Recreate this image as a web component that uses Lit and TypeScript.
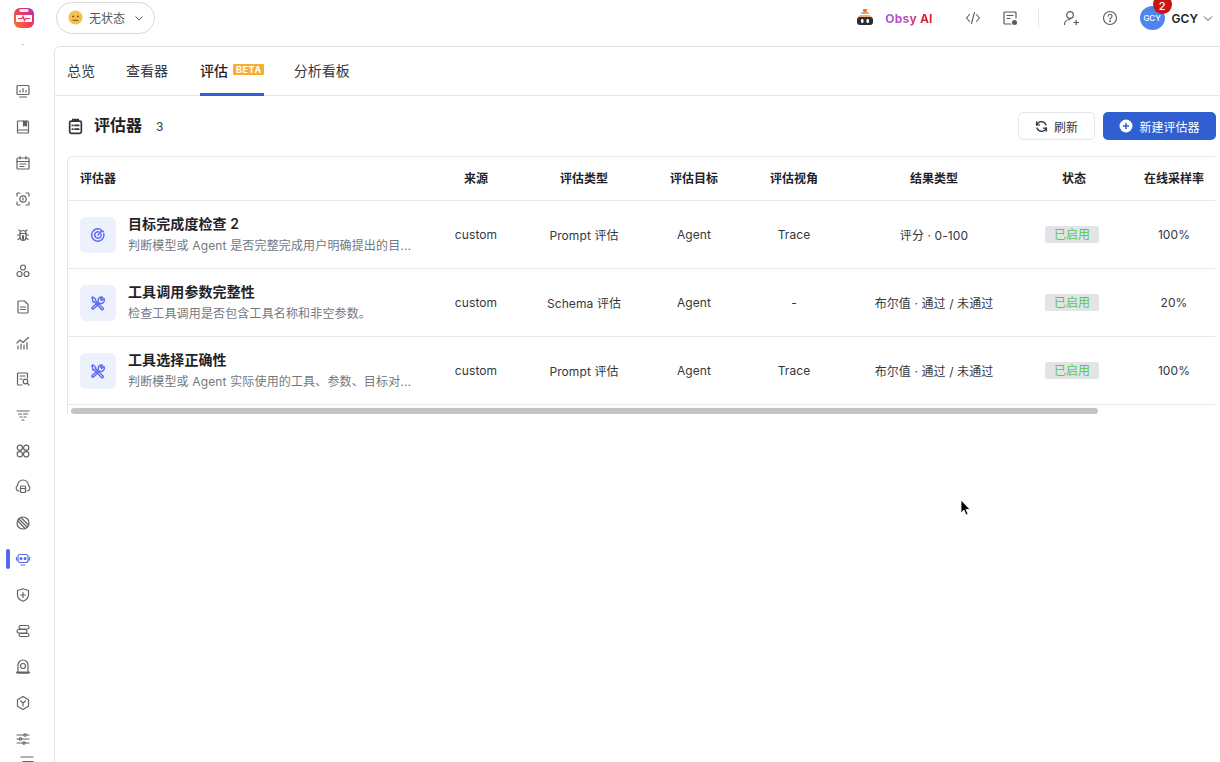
import { LitElement, html, css, svg } from "lit";
import { customElement } from "lit/decorators.js";

const ic = (body: unknown, cls = "") => html`<svg class=${cls} width="16" height="16" viewBox="0 0 16 16" fill="none" stroke="currentColor" stroke-width="1.200" stroke-linecap="round" stroke-linejoin="round">${body}</svg>`;

const sideIcons = [
  svg`<rect x="2" y="2.500" width="12" height="9" rx="1"/><path d="M5 9V7.500M8 9V5.500M11 9V7.500M4.500 14h7"/>`,
  svg`<rect x="2.500" y="2" width="11" height="12" rx="1"/><path d="M2.500 11h11"/><path d="M8.500 2v5l1.500-1 1.500 1V2" fill="currentColor"/>`,
  svg`<rect x="2" y="3" width="12" height="11" rx="1"/><path d="M2 6.500h12M5 1.500V4M11 1.500V4M5 9h6M5 11.500h4"/>`,
  svg`<path d="M2 5V3a1 1 0 0 1 1-1h2M11 2h2a1 1 0 0 1 1 1v2M14 11v2a1 1 0 0 1-1 1h-2M5 14H3a1 1 0 0 1-1-1v-2"/><circle cx="8" cy="8" r="3.200"/><path d="M8 7v2"/>`,
  svg`<path d="M5 6.500a3 3 0 0 1 6 0v4a3 3 0 0 1-6 0z"/><path d="M5.500 4.500 4 3M10.500 4.500 12 3M5 8H2.500M11 8h2.500M5 11l-2 1.500M11 11l2 1.500M5 6.500h6"/><path d="M8 9v3" stroke-width="2"/>`,
  svg`<circle cx="8" cy="4.500" r="2.500"/><circle cx="4.500" cy="11" r="2.500"/><circle cx="11.500" cy="11" r="2.500"/>`,
  svg`<path d="M3 3a1 1 0 0 1 1-1h5.500L13 5.500V13a1 1 0 0 1-1 1H4a1 1 0 0 1-1-1z"/><path d="M5.500 8h5M5.500 10.500h5"/>`,
  svg`<path d="M2 8l3-3 3 2.500L13.500 2.500M3 14v-3M6 14V9M9 14v-4M12 14V7.500"/>`,
  svg`<path d="M12.500 7V3a1 1 0 0 0-1-1h-8a1 1 0 0 0-1 1v10a1 1 0 0 0 1 1h3.500M5 5h5M5 8h2"/><circle cx="10.500" cy="10.500" r="2.300"/><path d="m12.200 12.200 1.800 1.800"/>`,
  svg`<path d="M2 4h12M3.500 7h3M8.500 7h4M5 10h2M9 10h2M7 13h2"/>`,
  svg`<circle cx="4.800" cy="4.800" r="2.600"/><circle cx="11.200" cy="4.800" r="2.600"/><rect x="2.200" y="8.600" width="5.200" height="5.200" rx="2.200"/><rect x="8.600" y="8.600" width="5.200" height="5.200" rx="2.200"/>`,
  svg`<path d="M4 12a3 3 0 0 1-1.500-5.500 5.500 5.500 0 0 1 11 0A3 3 0 0 1 12 12"/><rect x="5.500" y="7" width="5" height="6.500" rx="1"/><path d="M5.500 9.500h5"/>`,
  svg`<circle cx="8" cy="8" r="6"/><path d="M4 4l8 8M6 2.500l7 7M3 6l6.500 7"/>`,
  svg``,
  svg`<path d="M8 1.800 13.500 3.500V8c0 3-2.300 5-5.500 6.200C4.800 13 2.500 11 2.500 8V3.500z"/><path d="M8 5.500v5M5.500 8h5"/>`,
  svg`<rect x="4" y="2.500" width="10" height="3.500" rx="1.700"/><rect x="2" y="6.500" width="10" height="3.500" rx="1.700"/><rect x="4" y="10.500" width="10" height="3" rx="1.500"/>`,
  svg`<path d="M3 14V6a5 5 0 0 1 10 0v8z"/><circle cx="8" cy="7" r="2.500"/><path d="M2 13.500h12" stroke-width="2"/>`,
  svg`<path d="M8 1.500 13.500 4.700v6.600L8 14.500l-5.500-3.200V4.700z"/><path d="M5.500 6 8 8l2.500-2M8 8v3"/>`,
  svg`<path d="M2 4h12M2 8h12M2 12h12"/><circle cx="10" cy="4" r="1.200" fill="#fff"/><circle cx="5.500" cy="8" r="1.200" fill="#fff"/><circle cx="9" cy="12" r="1.200" fill="#fff"/>`,
];

const robot = svg`<rect x="3" y="3.500" width="10" height="8" rx="2"/><path d="M1.500 6.500v2.500M14.500 6.500v2.500M6 14h4"/><circle cx="6" cy="7.500" r=".9" fill="currentColor"/><circle cx="10" cy="7.500" r=".9" fill="currentColor"/>`;

const target = html`<svg width="16" height="16" viewBox="0 0 16 16" fill="none" stroke="#5b6cf0" stroke-width="1.500" stroke-linecap="round"><path d="M13.800 6.500A6.200 6.200 0 1 1 9.500 2"/><path d="M11 7.200A3.200 3.200 0 1 1 8.800 5"/><path d="M8 8l4-4M11 2.500v2h2.500"/></svg>`;
const tools = html`<svg width="16" height="16" viewBox="0 0 16 16" fill="none" stroke="#5b6cf0" stroke-width="1.400" stroke-linecap="round" stroke-linejoin="round"><path d="M2 2.500 3 2l2.500 2v1.500L13 13a1 1 0 0 1-1.500 1.500L4.500 7H3z" /><path d="M13.800 3.500 11.800 5.500 10.500 4.200l2-2A3.200 3.200 0 0 0 8.500 6.500L2.200 12.500a1 1 0 0 0 1.300 1.500L9.500 8a3.200 3.200 0 0 0 4.300-4.500z"/></svg>`;

const rows = [
  { icon: target, name: "目标完成度检查 2", desc: "判断模型或 Agent 是否完整完成用户明确提出的目...", kind: "Prompt 评估", view: "Trace", result: "评分 · 0-100", rate: "100%" },
  { icon: tools, name: "工具调用参数完整性", desc: "检查工具调用是否包含工具名称和非空参数。", kind: "Schema 评估", view: "-", result: "布尔值 · 通过 / 未通过", rate: "20%" },
  { icon: tools, name: "工具选择正确性", desc: "判断模型或 Agent 实际使用的工具、参数、目标对...", kind: "Prompt 评估", view: "Trace", result: "布尔值 · 通过 / 未通过", rate: "100%" },
];

@customElement("app-root")
export class AppRoot extends LitElement {
  static styles = css`
    :host { display: block; height: 762px; width: 1220px; overflow: hidden; background: #fff; color: #1f2329;
      font-family: Inter, "Noto Sans CJK SC", sans-serif; font-size: 12px; }
    * { box-sizing: border-box; }
    .top { height: 46px; display: flex; align-items: center; padding: 0 7px 11px 14px; }
    .logo { width: 20px; height: 20px; flex: none; }
    .status { margin: 0 0 0 22px; width: 99px; height: 32px; border: 1px solid #d9d9d9; border-radius: 16px; display: flex; align-items: center; padding-left: 11px; gap: 6px; color: #53585f; }
    .face { width: 15px; height: 15px; flex: none; }
    .chev { margin-left: 3px; }
    .spacer { flex: 1; }
    .right { display: flex; align-items: center; color: #555b63; margin-top: 1px; }
    .right svg { flex: none; }
    .gap21 { margin-left: 21px; }
    .gap23 { margin-left: 23px; }
    .obsy { font-weight: 700; font-size: 12px; letter-spacing: .2px; margin: 0 32px 0 10px;
      background: linear-gradient(90deg, #a050e0, #c04ab0 45%, #e02030 80%); -webkit-background-clip: text; background-clip: text; color: transparent; }
    .sep { width: 1px; height: 18px; background: #e5e6e8; margin: 0 24px 0 20px; }
    .avatar { position: relative; width: 25px; height: 24px; border-radius: 50%; background: #4f86ee; color: #fff; font-size: 8px; font-weight: 500; display: flex; align-items: center; justify-content: center; margin-left: 22px; flex: none; }
    .badge { position: absolute; left: 13px; top: -11px; width: 19px; height: 19px; border-radius: 50%; background: #c81414; color: #fff; font-size: 11px; padding-top: 5px; line-height: 13px; text-align: center; font-weight: 500; }
    .uname { color: #1f2329; font-weight: 600; font-size: 12px; margin: 0 5px 0 7px; }
    .body { display: flex; height: 716px; }
    .side { width: 54px; flex: none; height: 718px; overflow: hidden; position: relative; margin-top: -2px; color: #5f6368; }
    .cut { height: 4px; overflow: hidden; display: flex; justify-content: center; position: relative; }
    .cut svg { margin-top: -12px; margin-right: 8px; }
    .list { display: flex; flex-direction: column; gap: 20px; padding-top: 35px; align-items: flex-start; padding-left: 15px; }
    .item { height: 16px; display: block; position: relative; }
    .item svg { display: block; overflow: visible; }
    .on { color: #5468ee; }
    .bar { position: absolute; left: -9px; top: -2px; width: 4px; height: 20px; border-radius: 2px; background: #5468ee; }
    .coll { margin-top: -12px; }
    .main { flex: 1; min-width: 0; border: 1px solid #e1e3e6; border-right: 0; border-bottom: 0; border-radius: 6px 0 0 0; padding-right: 5px; }
    .tabs { height: 49px; margin-right: -5px; border-bottom: 1px solid #e4e6ea; display: flex; padding-left: 12px; gap: 31px; font-size: 14px; color: #33383f; }
    .tab { height: 49px; padding-bottom: 4px; display: flex; align-items: center; gap: 5px; position: relative; }
    .tab.act { font-weight: 500; color: #1f2329; margin: 0 -1px 0 1px; }
    .tab.act::after { content: ""; position: absolute; left: 0; right: 0; bottom: 0; height: 3px; background: #2f5fd0; }
    .beta { background: #f7ae2e; color: #fff; font-size: 9px; font-weight: 700; letter-spacing: .6px; height: 11px; line-height: 11px; padding: 0 2px 0 3px; border-radius: 1px; }
    .head { display: flex; align-items: center; height: 28px; margin: 16px -1px 16px 12px; }
    .head .t { font-size: 16px; font-weight: 600; margin-left: 10px; line-height: 26px; padding-bottom: 2px; }
    .head .n { font-size: 12px; margin-left: 14px; color: #33383f; }
    .btn { height: 28px; border-radius: 5px; display: flex; align-items: center; font-size: 12px; }
    .refresh { width: 77px; border: 1px solid #e4e6ea; gap: 6px; justify-content: center; color: #33383f; margin-right: 8px; }
    .new { width: 113px; background: #2f5fd0; color: #fff; gap: 6px; justify-content: center; }
    .table { margin-left: 12px; border: 1px solid #e6e7ea; border-right: 0; border-bottom: 0; border-radius: 6px 0 0 0; overflow: hidden; }
    .r { display: grid; grid-template-columns: 356px 104px 112px 108px 92px 188px 92px 108px; border-bottom: 1px solid #e6e7ea; align-items: center; text-align: center; color: #33383f; }
    .r.h { height: 44px; padding-bottom: 2px; font-weight: 600; color: #1f2329; font-size: 12px; }
    .r.d { height: 68px; font-size: 12px; letter-spacing: .1px; }
    .first { text-align: left; padding-left: 12px; display: flex; gap: 12px; align-items: center; }
    .ibox { width: 36px; height: 36px; border-radius: 6px; background: #edf0fd; display: flex; align-items: center; justify-content: center; flex: none; }
    .name { font-size: 14px; font-weight: 600; line-height: 20px; color: #1f2329; letter-spacing: .1px; }
    .desc { font-size: 12px; line-height: 18px; color: #73787f; margin-top: 3px; white-space: nowrap; letter-spacing: .15px; }
    .tag { display: inline-block; width: 54px; height: 17px; line-height: 17px; border-radius: 2px; background: #e3e4e7; color: #5bc83c; font-size: 12px; letter-spacing: 0; margin-right: 4px; }
    .scroll { height: 6px; margin: 3px 0 0 3px; width: 1027px; background: #c4c4c4; border-radius: 3px; }
    .cursor { position: absolute; left: 960px; top: 499px; }
  `;

  render() {
    return html`
      <div class="top">
        <svg class="logo" viewBox="0 0 20 20">
          <defs><linearGradient id="lg" x1="0" y1="1" x2="1" y2="0"><stop offset="0" stop-color="#fa7a1e"/><stop offset=".5" stop-color="#ef3d5a"/><stop offset="1" stop-color="#a82fb0"/></linearGradient></defs>
          <rect width="20" height="20" rx="6" fill="url(#lg)"/>
          <path d="M6 1a2.200 2.200 0 0 0 0 3h8a2.200 2.200 0 0 0 0-3" fill="#fff" opacity=".85"/>
          <rect x="2" y="7" width="16" height="7" fill="#fff" opacity=".95"/>
          <path d="M4 10.500h4l1-2 1.500 4 1-2h4.500" stroke="#e8344e" stroke-width="1.200" fill="none"/>
        </svg>
        <div class="status">
          <svg class="face" viewBox="0 0 16 16"><circle cx="8" cy="8" r="7.500" fill="#f6c04f"/><circle cx="5.500" cy="6.800" r="1" fill="#6d4a1c"/><circle cx="10.500" cy="6.800" r="1" fill="#6d4a1c"/><path d="M5 11h6" stroke="#6d4a1c" stroke-width="1"/></svg>
          <span>无状态</span>
          <svg class="chev" width="10" height="10" viewBox="0 0 10 10" fill="none" stroke="#555" stroke-width="1"><path d="M1.500 3.500 5 7l3.500-3.500"/></svg>
        </div>
        <div class="spacer"></div>
        <div class="right">
          <svg width="20" height="18" viewBox="0 0 20 18"><path d="M8 0h4v1.500a2 2 0 0 1-4 0z" fill="#f0752a"/><rect x="6" y="3" width="8" height="2" rx="1" fill="#f0a060"/><path d="M2 11a5 5 0 0 1 5-5h6a5 5 0 0 1 5 5v3H2z" fill="#f3b27a"/><rect x="2" y="8" width="16" height="8" rx="3" fill="#2b2e36"/><rect x="6" y="10" width="2.500" height="4" rx="1.200" fill="#fff"/><rect x="11.500" y="10" width="2.500" height="4" rx="1.200" fill="#fff"/></svg>
          <span class="obsy">Obsy AI</span>
          <svg width="16" height="16" viewBox="0 0 16 16" fill="none" stroke="currentColor" stroke-width="1.100" stroke-linecap="round" stroke-linejoin="round"><path d="M4.500 4.500 1.500 8l3 3.500M11.500 4.500l3 3.500-3 3.500M9.500 2.500l-3 11"/></svg>
          <svg class="gap21" width="16" height="16" viewBox="0 0 16 16" fill="none" stroke="currentColor" stroke-width="1.200" stroke-linecap="round"><path d="M14 8V3a1 1 0 0 0-1-1H3a1 1 0 0 0-1 1v10a1 1 0 0 0 1 1h6M5 5.500h6M5 8.500h3"/><circle cx="12.500" cy="12.500" r="2.500" fill="currentColor" stroke="none"/></svg>
          <div class="sep"></div>
          <svg width="16" height="16" viewBox="0 0 16 16" fill="none" stroke="currentColor" stroke-width="1.200" stroke-linecap="round"><circle cx="7" cy="5" r="3.300"/><path d="M1.500 14.500c0-3 2.300-5 5.500-5M11 12.500h4.500M13.200 10.300v4.400"/></svg>
          <svg class="gap23" width="16" height="16" viewBox="0 0 16 16" fill="none" stroke="currentColor" stroke-width="1.100" stroke-linecap="round"><circle cx="8" cy="8" r="6.500"/><path d="M6.200 6.200a1.900 1.900 0 1 1 2.700 1.700c-.6.300-.9.700-.9 1.400"/><circle cx="8" cy="11.300" r=".4" fill="currentColor"/></svg>
          <div class="avatar">GCY<span class="badge">2</span></div>
          <span class="uname">GCY</span>
          <svg width="10" height="10" viewBox="0 0 10 10" fill="none" stroke="#555" stroke-width="1"><path d="M1 3.500 5 7.500l4-4"/></svg>
        </div>
      </div>
      <div class="body">
        <div class="side">
          <div class="cut">${ic(svg`<path d="M2 9l6 3 6-3"/>`)}</div>
          <div class="list">
            ${sideIcons.map((b, i) => i === 13
              ? html`<div class="item on"><span class="bar"></span>${ic(robot)}</div>`
              : html`<div class="item">${ic(b)}</div>`)}
            <div class="item coll">${ic(svg`<path d="M6 2h12M8 6.500h10"/>`)}</div>
          </div>
        </div>
        <div class="main">
          <div class="tabs">
            <div class="tab">总览</div>
            <div class="tab">查看器</div>
            <div class="tab act">评估<span class="beta">BETA</span></div>
            <div class="tab">分析看板</div>
          </div>
          <div class="head">
            <svg width="17" height="17" viewBox="0 0 16 16" fill="none" stroke="#33383f" stroke-width="1.600" stroke-linecap="round"><rect x="2.500" y="3" width="11" height="11.500" rx="1.500"/><path d="M5.500 3V1.500h5V3" fill="#33383f"/><path d="M5 7h.5M7.500 7H11M5 10.500h.5M7.500 10.500H11"/></svg>
            <span class="t">评估器</span><span class="n">3</span>
            <div class="spacer"></div>
            <div class="btn refresh">
              <svg width="13" height="13" viewBox="0 0 16 16" fill="none" stroke="#33383f" stroke-width="1.800" stroke-linecap="round" stroke-linejoin="round"><path d="M13.500 6A6 6 0 0 0 3 4.500L2 6M2.500 10A6 6 0 0 0 13 11.500l1-1.500"/><path d="M2 2.500V6h3.500M14 13.500V10h-3.500"/></svg>
              <span>刷新</span>
            </div>
            <div class="btn new">
              <svg width="14" height="14" viewBox="0 0 14 14"><circle cx="7" cy="7" r="6.500" fill="#fff"/><path d="M7 4v6M4 7h6" stroke="#2f5fd0" stroke-width="1.500"/></svg>
              <span>新建评估器</span>
            </div>
          </div>
          <div class="table">
            <div class="r h">
              <div class="first">评估器</div><div>来源</div><div>评估类型</div><div>评估目标</div><div>评估视角</div><div>结果类型</div><div>状态</div><div>在线采样率</div>
            </div>
            ${rows.map(r => html`
              <div class="r d">
                <div class="first">
                  <div class="ibox">${r.icon}</div>
                  <div><div class="name">${r.name}</div><div class="desc">${r.desc}</div></div>
                </div>
                <div>custom</div><div>${r.kind}</div><div>Agent</div><div>${r.view}</div><div>${r.result}</div>
                <div><span class="tag">已启用</span></div><div>${r.rate}</div>
              </div>`)}
            <div class="scroll"></div>
          </div>
        </div>
      </div>
      <svg class="cursor" width="12" height="18" viewBox="0 0 12 18"><path d="M1 1v13l3-3 2 5 2-1-2-4.500h4z" fill="#000" stroke="#fff" stroke-width=".8"/></svg>
    `;
  }
}
